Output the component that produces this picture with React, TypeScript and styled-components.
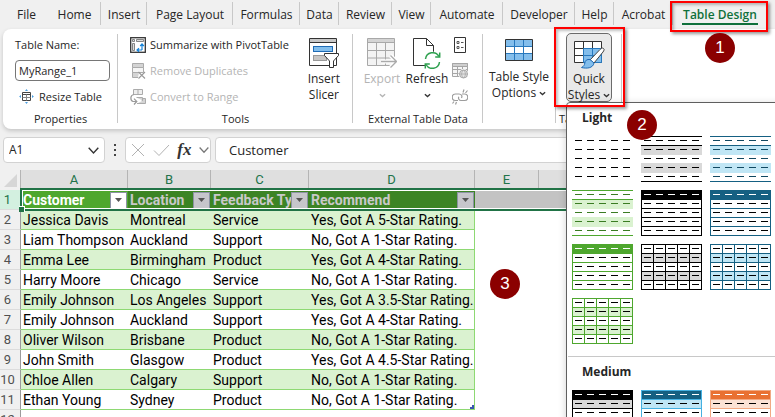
import React from "react";
import styled, { createGlobalStyle, css } from "styled-components";

const UI = `"Open Sans", "Noto Sans", sans-serif`;
const CELL = `Roboto, "Liberation Sans", sans-serif`;

const GlobalStyle = createGlobalStyle`
  *, *::before, *::after { box-sizing: border-box; }
  body { margin: 0; background: #f0f0f0; }
  button, input { font: inherit; color: inherit; margin: 0; padding: 0; border: 0; background: none; }
  svg { display: block; flex: none; }
`;

const Page = styled.div`
  position: relative;
  display: flex;
  flex-direction: column;
  height: 100vh;
  overflow: hidden;
  color: #262626;
  background: #f0f0f0;
  font: 11px/16px ${UI};
`;

/* ---------- tabs ---------- */

const TabBar = styled.nav`
  display: flex;
  flex: none;
  height: 29px;
  padding-left: 5px;
  font-size: 12px;
`;

const Tab = styled.button<{ $w: number; $active?: boolean; $line?: boolean }>`
  position: relative;
  flex: none;
  width: ${(p) => p.$w}px;
  height: 29px;
  white-space: nowrap;
  &::after {
    content: "";
    position: absolute;
    right: 0;
    top: 2px;
    width: 1px;
    height: 23px;
    background: ${(p) => (p.$line ? "#c8c8c8" : "transparent")};
  }
  ${(p) =>
    p.$active &&
    css`
      color: #0f703b;
      font-weight: 600;
    `}
`;

const Underline = styled.span`
  position: absolute;
  left: 9px;
  right: 9px;
  top: 23px;
  height: 2px;
  background: #0f703b;
`;

const RedFrame = styled.span<{ $inset: string }>`
  position: absolute;
  inset: ${(p) => p.$inset};
  z-index: 5;
  border: 2px solid #f00;
  box-shadow: 2px 2px 3px rgba(0, 0, 0, 0.4), inset 2px 2px 3px rgba(0, 0, 0, 0.25);
  pointer-events: none;
`;

const Callout = styled.span<{ $left: number; $top: number }>`
  position: absolute;
  left: ${(p) => p.$left}px;
  top: ${(p) => p.$top}px;
  z-index: 6;
  display: flex;
  align-items: center;
  justify-content: center;
  width: 30px;
  height: 30px;
  border-radius: 50%;
  background: #8b0000;
  color: #fff;
  font: 17px/30px "Liberation Sans", sans-serif;
`;

/* ---------- ribbon ---------- */

const Ribbon = styled.section`
  position: relative;
  z-index: 2;
  display: flex;
  flex: none;
  height: 100px;
  margin-left: 3px;
  padding-top: 3px;
  background: #fff;
  border-radius: 8px 0 0 8px;
  box-shadow: 0 2px 4px rgba(0, 0, 0, 0.18);
`;

const Group = styled.div<{ $w: number }>`
  position: relative;
  display: flex;
  flex: none;
  flex-direction: column;
  width: ${(p) => p.$w}px;
  height: 91px;
  &::after {
    content: "";
    position: absolute;
    right: 0;
    top: 2px;
    bottom: 0;
    width: 1px;
    background: #c8c8c8;
  }
`;

const GroupBody = styled.div<{ $pad?: string }>`
  display: flex;
  flex: 1;
  padding: ${(p) => p.$pad ?? "0"};
`;

const GroupName = styled.div<{ $left?: boolean }>`
  height: 16px;
  margin-bottom: -4px;
  padding-left: ${(p) => (p.$left ? "3px" : "0")};
  text-align: ${(p) => (p.$left ? "left" : "center")};
  white-space: nowrap;
`;

const Column = styled.div`
  display: flex;
  flex: none;
  flex-direction: column;
`;

const NameLabel = styled.label`
  height: 28px;
  line-height: 26px;
`;

const NameInput = styled.input`
  width: 95px;
  height: 21px;
  padding: 0 3px;
  border: 1px solid #767676;
  border-radius: 4px;
`;

const SmallButton = styled.button<{ $muted?: boolean }>`
  display: flex;
  align-items: center;
  gap: 4px;
  height: 26px;
  white-space: nowrap;
  color: ${(p) => (p.$muted ? "#b4b4b4" : "#262626")};
`;

const ResizeButton = styled(SmallButton)`
  gap: 5px;
  padding: 5px 0 0 4px;
`;

const BigButton = styled.button<{ $w: number; $muted?: boolean }>`
  display: flex;
  flex: none;
  flex-direction: column;
  align-items: center;
  width: ${(p) => p.$w}px;
  height: 72px;
  padding-top: 6px;
  font-size: 12px;
  color: ${(p) => (p.$muted ? "#b4b4b4" : "#262626")};
  white-space: nowrap;
`;

const BigLine = styled.span`
  display: flex;
  align-items: center;
  gap: 3px;
  height: 16px;
`;

const IconGap = styled.span<{ $h?: number }>`
  display: flex;
  flex: none;
  height: ${(p) => p.$h ?? 33}px;
`;

const OptionsButton = styled(BigButton)`
  padding-top: 7px;
`;

const IconStack = styled(Column)`
  gap: 10px;
  padding: 5px 0 0 3px;
`;

const QuickWrap = styled.div`
  position: relative;
  width: 46px;
`;

const QuickButton = styled(BigButton)`
  height: 69px;
  margin-top: 1px;
  padding-top: 7px;
  border: 1px solid #6b6b6b;
  border-radius: 5px;
  background: #e9e9e9;
`;

/* ---------- gallery ---------- */

const Gallery = styled.div`
  position: absolute;
  z-index: 4;
  left: 0;
  top: 70px;
  width: 240px;
  height: 400px;
  border: 1px solid #5f5f5f;
  border-radius: 4px 0 0 0;
  background: #fff;
  box-shadow: 0 2px 8px rgba(0, 0, 0, 0.18);
`;

const GalleryTitle = styled.h3`
  margin: 0;
  height: 33px;
  padding-left: 15px;
  font: 700 12px/30px ${UI};
`;

const GalleryGrid = styled.div`
  display: grid;
  grid-template-columns: repeat(3, 61px);
  gap: 8px;
  padding: 0 5px 12px;
`;

const GalleryRule = styled.hr`
  margin: 0 0 0 1px;
  border: 0;
  border-top: 1px solid #c8c8c8;
`;

/* ---------- formula bar ---------- */

const FormulaBar = styled.div`
  display: flex;
  flex: none;
  height: 41px;
  padding: 8px 0 7px 3px;
  font-size: 13px;
`;

const Box = styled.div<{ $w: number; $end?: number }>`
  display: flex;
  flex: none;
  align-items: center;
  justify-content: space-between;
  width: ${(p) => p.$w}px;
  height: 26px;
  padding: 0 ${(p) => p.$end ?? 5}px 0 5px;
  background: #fff;
  border: 1px solid #d2d2d2;
  border-radius: 4px;
`;

const CellRef = styled.input`
  width: 60px;
  font-size: 12px;
`;

const Dots = styled.div`
  display: flex;
  align-items: center;
  justify-content: center;
  width: 20px;
`;

const IconButton = styled.button`
  display: flex;
  flex: none;
`;

const FormulaInput = styled.input`
  flex: 1;
  min-width: 0;
  height: 26px;
  margin-left: 4px;
  padding: 0 10px 0 13px;
  background: #fff;
  border: 1px solid #d2d2d2;
  border-radius: 4px 0 0 4px;
`;

/* ---------- sheet ---------- */

const Sheet = styled.table`
  flex: none;
  width: 100%;
  table-layout: fixed;
  border-collapse: separate;
  border-spacing: 0;
  background: #fff;
  font: 14px/18px ${CELL};
  color: #000;
  td, th { height: 20px; padding: 0; white-space: nowrap; }
`;

const ColHead = styled.th`
  background: #dfdfdf;
  border-right: 1px solid #b4b4b4;
  color: #21734a;
  font-weight: 400;
  font-size: 13px;
`;

const Corner = styled.th`
  background: #f0f0f0;
  border-right: 1px solid #b4b4b4;
  svg { margin-left: 4px; }
`;

const RowHead = styled.th<{ $on?: boolean }>`
  background: ${(p) => (p.$on ? "#d3f0e0" : "#f0f0f0")};
  border-right: 1px solid #9b9b9b;
  border-bottom: 1px solid #dcdcdc;
  color: ${(p) => (p.$on ? "#21734a" : "#505050")};
  font-weight: 400;
  font-size: 13px;
  text-align: center;
  tbody && { padding-right: 5px; }
`;

const HeadCell = styled.th<{ $first?: boolean }>`
  background: ${(p) => (p.$first ? "#4ea72e" : "#3c8424")};
  color: ${(p) => (p.$first ? "#fff" : "#c9c9c9")};
`;

const HeadInner = styled.div`
  display: flex;
  align-items: center;
  height: 20px;
  padding: 0 1px 0 2px;
  font-weight: 700;
  span { flex: 1; overflow: hidden; text-align: left; }
`;

const FilterButton = styled.button<{ $first?: boolean }>`
  display: flex;
  flex: none;
  align-items: center;
  justify-content: center;
  width: 17px;
  height: 17px;
  background: ${(p) => (p.$first ? "#fff" : "#c6c6cb")};
  border: 1px solid #8c93a3;
`;

const Cell = styled.td<{ $band?: boolean; $last?: boolean }>`
  background: ${(p) => (p.$band ? "#daf2d0" : "#fff")};
  border-bottom: 1px solid #8ed973;
  border-right: ${(p) => (p.$last ? "1px solid #8ed973" : "0")};
  tbody && { padding-left: 2px; }
`;

const Picked = styled.td`
  background: #c3c3c3;
`;

const HeaderRow = styled.tr`
  position: relative;
`;

const Selection = styled.div`
  position: absolute;
  left: 20px;
  right: -4px;
  top: -2px;
  height: 23px;
  border: 2px solid #217346;
  pointer-events: none;
  &::before {
    content: "";
    position: absolute;
    inset: 0;
    border: solid #fff;
    border-width: 1px 0 1px 1px;
  }
  &::after {
    content: "";
    position: absolute;
    left: -3px;
    bottom: -3px;
    width: 6px;
    height: 6px;
    background: #217346;
    border: solid #fff;
    border-width: 1px 1px 0 0;
  }
`;

const LastInner = styled.div`
  position: relative;
  svg { position: absolute; right: 0; bottom: 0; }
`;

/* ---------- icons ---------- */

const Chevron = ({ c = "#333", s = 7 }: { c?: string; s?: number }) => (
  <svg width={s} height={s} viewBox="0 0 8 8" fill="none" stroke={c} strokeWidth={s > 8 ? 1 : 1.5}>
    <path d={s > 8 ? "M0.5 2 4 5.8 7.5 2" : "M1 2.5 4 5.2 7 2.5"} />
  </svg>
);

const ResizeIcon = () => (
  <svg width="15" height="15" viewBox="0 0 15 15">
    <path d="M3.500 3.500h8v8h-8z" fill="#fff" stroke="#444" />
    <path d="M3.500 5.500h8" stroke="#444" />
    <path d="M3.500 8.500h8M7.500 5.500v6" stroke="#888" fill="none" />
    <path d="M6 1.800 7.500.3 9 1.800zM6 13.200l1.500 1.500L9 13.200zM1.800 6 .3 7.500 1.800 9zM13.200 6l1.500 1.500L13.200 9z" fill="#1683d8" />
  </svg>
);

const PivotIcon = () => (
  <svg width="16" height="16" viewBox="0 0 16 16" fill="none">
    <rect x=".7" y=".7" width="14.6" height="14.6" fill="#fff" stroke="#333" strokeWidth="1.3" />
    <path d="M2.5 2.5h2v2h-2zM6.5 2.5h7v2h-7zM2.5 6.5h2v7h-2z" fill="#ddd" stroke="#777" strokeWidth=".9" />
    <path d="M12 13V7.500M12 13H7M10.200 9 12 7l1.800 2M9 11.200 7 13l2 1.800" stroke="#1683d8" strokeWidth="1.2" />
  </svg>
);

const RemoveDupIcon = () => (
  <svg width="16" height="16" viewBox="0 0 16 16" fill="none" stroke="#ababab">
    <path d="M2.500.500h11v4h-11z" fill="#d4d4d4" />
    <path d="M2.500 4.500h11v5h-11z" fill="#f5f5f5" />
    <path d="M9 9.500H2.500v5H8" fill="#d4d4d4" />
    <path d="M8.500 9 15 15.500M15 9l-6.500 6.500" stroke="#999" strokeWidth="1.1" />
  </svg>
);

const ConvertIcon = () => (
  <svg width="16" height="16" viewBox="0 0 16 16" fill="none" stroke="#ababab">
    <path d="M3.500.500h9v5h-9zM8 .5v5" fill="#eee" />
    <path d="M6.500 8.500h6v3M7 14.500h8.500v-5H13L12 12" fill="#d4d4d4" />
    <path d="M4 5.500C0 6 0 11.500 3 12.500h3.500M4 9.700l2.800 2.800L4 15.500" stroke="#999" strokeWidth="1.2" />
  </svg>
);

const SlicerIcon = () => (
  <svg width="30" height="30" viewBox="0 0 30 30" fill="none">
    <path d="M.5.5h27v27H.5z" fill="#fff" stroke="#333" />
    <path d="M1 1h26v3H1z" fill="#c8c8c8" />
    <path d="M.5 4.500h27" stroke="#333" />
    <rect x="4.500" y="8.500" width="19" height="5" fill="#83beec" stroke="#1f6bb5" />
    <rect x="4.500" y="17.500" width="13" height="5" fill="#c8c6c4" stroke="#999" />
    <path d="M15.500 15.500h14v2l-5 5.500v6.500h-4V23l-5-5.500z" fill="#fff" stroke="#333" />
  </svg>
);

const ExportIcon = () => (
  <svg width="30" height="30" viewBox="0 0 30 30" fill="none" stroke="#a8a8a8">
    <path d="M.5.500h27v27H.5z" fill="#f3f3f3" />
    <path d="M1 1h26v3.500H1z" fill="#d4d4d4" stroke="none" />
    <path d="M.5 4.500h27M.5 12.500h27M.5 20h27M9.500 4.500v23M18.500 4.500v23" />
    <path d="M14 23.500h15M23.500 17.500l6 6-6 6" stroke="#fff" strokeWidth="4" />
    <path d="M14 23.500h15M23.500 17.500l6 6-6 6" stroke="#aaa" strokeWidth="1.300" />
  </svg>
);

const RefreshIcon = () => (
  <svg width="28" height="31" viewBox="0 0 28 31" fill="none">
    <path d="M.5.500h13l7 7v20H.5z" fill="#fff" stroke="#333" />
    <path d="M13.500.500v7h7" stroke="#333" />
    <circle cx="19.500" cy="22.500" r="9" fill="#fff" />
    <path d="M12.500 21a7.200 7.200 0 0 1 13.500-2.500M26.500 24a7.200 7.200 0 0 1-13.500 2.500" stroke="#2ea04f" strokeWidth="1.500" />
    <path d="M26.700 14.500v4.500h-4.500M12.300 30.500V26h4.500" stroke="#2ea04f" strokeWidth="1.500" />
  </svg>
);

const PropsIcon = () => (
  <svg width="16" height="16" viewBox="0 0 16 16" fill="none" stroke="#333">
    <path d="M2.500.500h11v15h-11z" fill="#fff" />
    <path d="M5 4.500h2v2H5zM5 9.500h2v2H5zM9 5.500h2.500M9 10.500h2.500" stroke="#555" />
  </svg>
);

const WebIcon = () => (
  <svg width="16" height="16" viewBox="0 0 16 16" fill="none" stroke="#a6a6a6">
    <path d="M.5.500h15v13H.5z" fill="#f6f6f6" />
    <path d="M.5.500h15v3H.5z" fill="#cfcfcf" />
    <path d="M.5 6.500h15M.5 10.500h7M5.500 3.500v10M10.500 3.500v3" />
    <circle cx="11.500" cy="11" r="5" fill="#fff" stroke="none" />
    <circle cx="11.500" cy="11" r="4" fill="#e4e4e4" />
    <path d="M7.500 11h8M11.500 7c-2.500 2-2.500 6 0 8M11.500 7c2.500 2 2.500 6 0 8" strokeWidth=".8" />
  </svg>
);

const UnlinkIcon = () => (
  <svg width="16" height="16" viewBox="0 0 16 16" fill="none" stroke="#9c9c9c" strokeWidth="1.200">
    <path d="M6 11.500H3.500a3 3 0 0 1 0-6.500H7c2.500 0 3.500 2 2.500 4M10 5h2.500a3 3 0 0 1 0 6.500H9c-2 0-3-2-2.200-3.700" />
    <path d="M11 3.500 12 .500M13.500 4l2-2.500M4.500 13l-1 2.500M2 12.500.500 14.500" />
  </svg>
);

const StyleOptionsIcon = () => (
  <svg width="28" height="22" viewBox="0 0 28 22">
    <path d="M.5.500h27v21H.5z" fill="#fff" />
    <path d="M.5.500h27v7H.5zM.5 14.500h27v7H.5z" fill="#83beec" />
    <path d="M9.500 1v20M18.500 1v20M1 7.500h26M1 14.500h26" stroke="#2778bd" />
    <path d="M.5.500h27v21H.5z" fill="none" stroke="#333" />
  </svg>
);

const QuickStylesIcon = () => (
  <svg width="31" height="28" viewBox="0 0 31 28" fill="none">
    <path d="M.5.500h27v21H.5z" fill="#fff" stroke="#333" />
    <path d="M9.500 7.500h18v14h-18z" fill="#83beec" />
    <path d="M9.500.500v21M18.500.500v21M.5 7.500h27M.5 14.500h27" stroke="#333" />
    <path d="M9.500 7.500v14h18v-14zM18.500 7.500v14M9.500 14.500h18" stroke="#2778bd" />
    <path d="M29.500 7.500c1.200.8.500 2-.5 3.500l-9 11-4-3L26 8.500c1.500-1.500 2.500-1.800 3.500-1z" fill="#fff" stroke="#444" />
    <path d="M16 18.500c-3-.5-5 1-5.200 3.500-.2 2-1.300 3.500-3.300 4.500 5 1.300 11.500.8 12.500-4.500z" fill="#83beec" stroke="#1f6bb5" />
  </svg>
);

const CancelIcon = () => (
  <svg width="14" height="14" viewBox="0 0 14 14" stroke="#b2b2b2" fill="none">
    <path d="M1 1l12 12M13 1 1 13" />
  </svg>
);

const CheckIcon = () => (
  <svg width="17" height="14" viewBox="0 0 17 14" stroke="#b2b2b2" fill="none">
    <path d="M1 7.500 6 12.500 16 2" />
  </svg>
);

const Fx = styled.span`
  font: italic 700 17px/18px "Liberation Serif", serif;
  color: #333;
`;

const Down = ({ c }: { c: string }) => (
  <svg width="7" height="4" viewBox="0 0 7 4">
    <path d="M0 0h7L3.500 4z" fill={c} />
  </svg>
);

/* ---------- style thumbnails ---------- */

type Thumb = {
  name: string;
  line?: string;
  head?: string;
  band?: string;
  dash: string;
  kind: "plain" | "open" | "rows" | "grid" | "medium";
};

const light: Thumb[] = [
  { name: "Light 1", dash: "#000", kind: "plain" },
  { name: "Light 2", line: "#000", band: "#d9d9d9", dash: "#000", kind: "open" },
  { name: "Light 3", line: "#156082", band: "#c0e6f5", dash: "#104861", kind: "open" },
  { name: "Light 4", line: "#4ea72e", band: "#daf2d0", dash: "#3a7c22", kind: "open" },
  { name: "Light 5", line: "#000", head: "#000", dash: "#000", kind: "rows" },
  { name: "Light 6", line: "#156082", head: "#156082", dash: "#000", kind: "rows" },
  { name: "Light 7", line: "#4ea72e", head: "#4ea72e", dash: "#000", kind: "rows" },
  { name: "Light 8", line: "#000", band: "#d9d9d9", dash: "#000", kind: "grid" },
  { name: "Light 9", line: "#156082", band: "#c0e6f5", dash: "#000", kind: "grid" },
  { name: "Light 10", line: "#4ea72e", band: "#daf2d0", dash: "#000", kind: "grid" },
];

const medium: Thumb[] = [
  { name: "Medium 1", line: "#000", head: "#000", band: "#d9d9d9", dash: "#000", kind: "medium" },
  { name: "Medium 2", line: "#45b0e1", head: "#156082", band: "#c0e6f5", dash: "#000", kind: "medium" },
  { name: "Medium 3", line: "#f1a983", head: "#e97132", band: "#fbe2d5", dash: "#000", kind: "medium" },
];

const five = [0, 1, 2, 3, 4];

const StyleThumb = ({ t }: { t: Thumb }) => {
  const lines =
    t.kind === "plain" ? [] : t.kind === "open" ? [0, 9, 45] : [0, 9, 18, 27, 36, 45];
  const boxed = t.kind !== "plain" && t.kind !== "open";
  return (
    <svg width="61" height="46" shapeRendering="crispEdges">
      {t.band && (
        <>
          <rect y="9" width="61" height="10" fill={t.band} />
          <rect y="27" width="61" height="10" fill={t.band} />
        </>
      )}
      {lines.map((y) => (
        <rect key={y} y={y} width="61" height="1" fill={t.line} />
      ))}
      {t.head && (
        <rect
          x={t.kind === "medium" ? 1 : 0}
          y={t.kind === "medium" ? 1 : 0}
          width={t.kind === "medium" ? 59 : 61}
          height={t.kind === "medium" ? 8 : 10}
          fill={t.head}
        />
      )}
      {boxed && t.kind !== "grid" && (
        <>
          <rect width="1" height="46" fill={t.line} />
          <rect x="60" width="1" height="46" fill={t.line} />
        </>
      )}
      {t.kind === "grid" &&
        [0, 12, 24, 36, 48, 60].map((x) => <rect key={x} x={x} width="1" height="46" fill={t.line} />)}
      {five.map((r) =>
        five.map((c) => (
          <rect
            key={`${r}-${c}`}
            x={3 + c * 12}
            y={4 + r * 9}
            width="7"
            height="1"
            fill={r === 0 && t.head ? "#fff" : t.dash}
          />
        ))
      )}
    </svg>
  );
};

/* ---------- data ---------- */

const tabs: [string, number][] = [
  ["File", 43],
  ["Home", 53],
  ["Insert", 46],
  ["Page Layout", 86],
  ["Formulas", 67],
  ["Data", 39],
  ["Review", 53],
  ["View", 39],
  ["Automate", 72],
  ["Developer", 72],
  ["Help", 39],
  ["Acrobat", 59],
];

const headers = ["Customer", "Location", "Feedback Type", "Recommend"];

const rows = [
  ["Jessica Davis", "Montreal", "Service", "Yes, Got A 5-Star Rating."],
  ["Liam Thompson", "Auckland", "Support", "No, Got A 1-Star Rating."],
  ["Emma Lee", "Birmingham", "Product", "Yes, Got A 4-Star Rating."],
  ["Harry Moore", "Chicago", "Service", "No, Got A 1-Star Rating."],
  ["Emily Johnson", "Los Angeles", "Support", "Yes, Got A 3.5-Star Rating."],
  ["Emily Johnson", "Auckland", "Support", "Yes, Got A 4-Star Rating."],
  ["Oliver Wilson", "Brisbane", "Product", "No, Got A 1-Star Rating."],
  ["John Smith", "Glasgow", "Product", "Yes, Got A 4.5-Star Rating."],
  ["Chloe Allen", "Calgary", "Support", "No, Got A 1-Star Rating."],
  ["Ethan Young", "Sydney", "Product", "No, Got A 1-Star Rating."],
];

const columnWidths = [21, 107, 83, 98, 166, 64];

export default function App() {
  return (
    <Page>
      <GlobalStyle />
      <TabBar>
        {tabs.map(([name, w], i) => (
          <Tab key={name} $w={w} $line={i > 0}>
            {name}
          </Tab>
        ))}
        <Tab $w={94} $active>
          Table Design
          <Underline />
          <RedFrame $inset="1px -1px -3px -3px" />
        </Tab>
      </TabBar>

      <Ribbon>
        <Group $w={115}>
          <GroupBody $pad="0 0 0 12px">
            <Column>
              <NameLabel htmlFor="table-name">Table Name:</NameLabel>
              <NameInput id="table-name" defaultValue="MyRange_1" />
              <ResizeButton>
                <ResizeIcon />
                Resize Table
              </ResizeButton>
            </Column>
          </GroupBody>
          <GroupName>Properties</GroupName>
        </Group>

        <Group $w={235}>
          <GroupBody $pad="0 0 0 12px">
            <Column>
              <SmallButton>
                <PivotIcon />
                Summarize with PivotTable
              </SmallButton>
              <SmallButton $muted disabled>
                <RemoveDupIcon />
                Remove Duplicates
              </SmallButton>
              <SmallButton $muted disabled>
                <ConvertIcon />
                Convert to Range
              </SmallButton>
            </Column>
            <BigButton $w={70}>
              <IconGap>
                <SlicerIcon />
              </IconGap>
              <BigLine>Insert</BigLine>
              <BigLine>Slicer</BigLine>
            </BigButton>
          </GroupBody>
          <GroupName>Tools</GroupName>
        </Group>

        <Group $w={130}>
          <GroupBody $pad="0 0 0 6px">
            <BigButton $w={46} $muted disabled>
              <IconGap>
                <ExportIcon />
              </IconGap>
              <BigLine>Export</BigLine>
              <BigLine>
                <Chevron c="#b4b4b4" />
              </BigLine>
            </BigButton>
            <BigButton $w={44}>
              <IconGap>
                <RefreshIcon />
              </IconGap>
              <BigLine>Refresh</BigLine>
              <BigLine>
                <Chevron />
              </BigLine>
            </BigButton>
            <IconStack>
              <IconButton aria-label="Properties">
                <PropsIcon />
              </IconButton>
              <IconButton aria-label="Open in Browser" disabled>
                <WebIcon />
              </IconButton>
              <IconButton aria-label="Unlink" disabled>
                <UnlinkIcon />
              </IconButton>
            </IconStack>
          </GroupBody>
          <GroupName>External Table Data</GroupName>
        </Group>

        <Group $w={73}>
          <GroupBody>
            <OptionsButton $w={72}>
              <IconGap $h={30}>
                <StyleOptionsIcon />
              </IconGap>
              <BigLine>Table Style</BigLine>
              <BigLine>
                Options <Chevron />
              </BigLine>
            </OptionsButton>
          </GroupBody>
        </Group>

        <Group $w={66}>
          <GroupBody $pad="0 0 0 10px">
            <QuickWrap>
              <QuickButton $w={46} aria-expanded="true">
                <IconGap $h={30}>
                  <QuickStylesIcon />
                </IconGap>
                <BigLine>Quick</BigLine>
                <BigLine>
                  Styles <Chevron />
                </BigLine>
              </QuickButton>
              <Gallery>
                <GalleryTitle>Light</GalleryTitle>
                <GalleryGrid>
                  {light.map((t) => (
                    <IconButton key={t.name} aria-label={t.name}>
                      <StyleThumb t={t} />
                    </IconButton>
                  ))}
                </GalleryGrid>
                <GalleryRule />
                <GalleryTitle>Medium</GalleryTitle>
                <GalleryGrid>
                  {medium.map((t) => (
                    <IconButton key={t.name} aria-label={t.name}>
                      <StyleThumb t={t} />
                    </IconButton>
                  ))}
                </GalleryGrid>
              </Gallery>
              <RedFrame $inset="-5px -13px 4px -12px" />
            </QuickWrap>
          </GroupBody>
          <GroupName $left>Table Styles</GroupName>
        </Group>
      </Ribbon>

      <FormulaBar>
        <Box $w={102}>
          <CellRef aria-label="Name box" defaultValue="A1" />
          <IconButton aria-label="Show names">
            <Chevron s={11} />
          </IconButton>
        </Box>
        <Dots>
          <svg width="2" height="12" viewBox="0 0 2 12" fill="#444">
            <path d="M0 0h2v2H0zM0 5h2v2H0zM0 10h2v2H0z" />
          </svg>
        </Dots>
        <Box $w={86} $end={1}>
          <IconButton aria-label="Cancel">
            <CancelIcon />
          </IconButton>
          <IconButton aria-label="Enter">
            <CheckIcon />
          </IconButton>
          <IconButton aria-label="Insert function">
            <Fx>fx</Fx>
          </IconButton>
          <Chevron s={10} c="#777" />
        </Box>
        <FormulaInput aria-label="Formula" defaultValue="Customer" />
      </FormulaBar>

      <Sheet>
        <colgroup>
          {columnWidths.map((w, i) => (
            <col key={i} width={w} />
          ))}
          <col />
        </colgroup>
        <thead>
          <tr>
            <Corner>
              <svg width="13" height="13">
                <path d="M13 0v13H0z" fill="#d6d6d6" />
              </svg>
            </Corner>
            {["A", "B", "C", "D", "E", ""].map((c, i) => (
              <ColHead key={i}>{c}</ColHead>
            ))}
          </tr>
        </thead>
        <tbody>
          <HeaderRow>
            <RowHead $on>1</RowHead>
            {headers.map((h, i) => (
              <HeadCell key={h} $first={i === 0}>
                <HeadInner>
                  <span>{h}</span>
                  <FilterButton $first={i === 0} aria-label={`Filter ${h}`}>
                    <Down c="#555" />
                  </FilterButton>
                </HeadInner>
              </HeadCell>
            ))}
            <Picked />
            <Picked>
              <Selection />
            </Picked>
          </HeaderRow>
          {rows.map((r, n) => (
            <tr key={n}>
              <RowHead>{n + 2}</RowHead>
              {r.map((v, i) => (
                <Cell key={i} $band={n % 2 === 0} $last={i === 3}>
                  {n === 9 && i === 3 ? (
                    <LastInner>
                      {v}
                      <svg width="4" height="4">
                        <path d="M4 0v4H0V2h2V0z" fill="#3a55b0" />
                      </svg>
                    </LastInner>
                  ) : (
                    v
                  )}
                </Cell>
              ))}
              <td />
              <td />
            </tr>
          ))}
          <tr>
            <RowHead>12</RowHead>
            <td colSpan={6} />
          </tr>
        </tbody>
      </Sheet>

      <Callout $left={705} $top={33}>1</Callout>
      <Callout $left={627} $top={110}>2</Callout>
      <Callout $left={490} $top={269}>3</Callout>
    </Page>
  );
}
